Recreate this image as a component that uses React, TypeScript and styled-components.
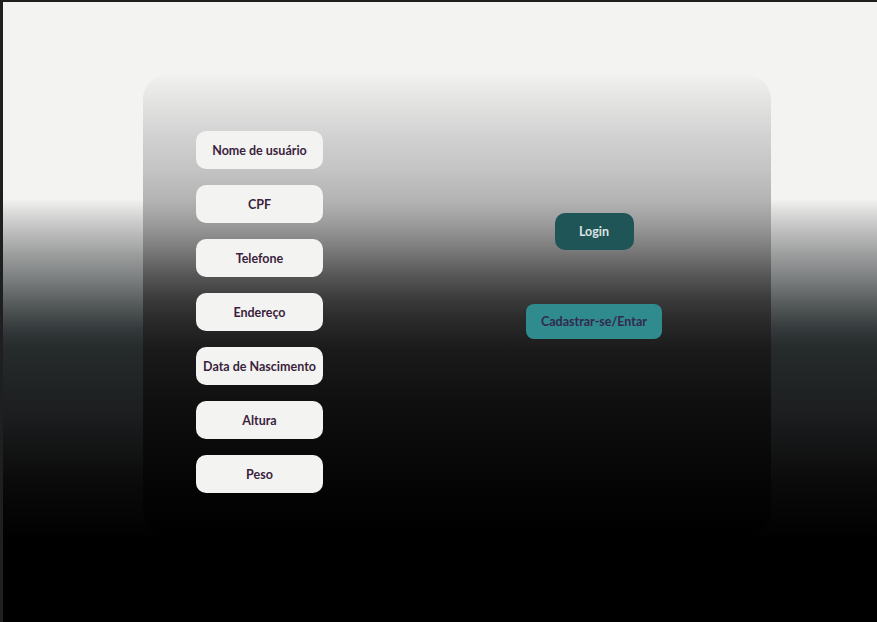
import styled, { createGlobalStyle } from 'styled-components';

const GlobalStyle = createGlobalStyle`
  html, body {
    margin: 0;
    padding: 0;
  }
  body {
    background: #000;
    font-family: Lato, "Noto Sans", sans-serif;
  }
  * {
    box-sizing: border-box;
  }
`;

const StyledPage = styled.div`
  background: linear-gradient(
    to bottom,
    #f3f3f1 0px,
    #f3f3f1 197px,
    #dcdcdb 210px,
    #c0c0c0 228px,
    #9c9e9e 252px,
    #7a7d7e 278px,
    #4d5253 308px,
    #33393a 328px,
    #262b2c 345px,
    #1c1e1f 411px,
    #0b0b0b 478px,
    #000 540px
  );
  border-left: 3px solid #1f1f1f;
  border-top: 2px solid #1f1f1f;
  height: 622px;
  padding: 73px 0 0 140px;
  width: 877px;
`;

const StyledCard = styled.main`
  background: linear-gradient(
    to bottom,
    #f1f1f0 0px,
    #e4e4e3 25px,
    #d2d2d2 60px,
    #c6c6c6 90px,
    #b4b4b4 125px,
    #9a9a9a 150px,
    #7a7a7a 175px,
    #575757 200px,
    #3a3a3a 225px,
    #2a2a2a 245px,
    #1a1a1a 275px,
    #101010 325px,
    #060606 400px,
    #000 460px
  );
  border-radius: 24px;
  display: grid;
  grid-template-columns: 127px 1fr;
  height: 460px;
  padding: 56px 0 0 53px;
  width: 628px;
`;

const StyledFieldList = styled.div`
  display: flex;
  flex-direction: column;
  gap: 16px;
`;

const StyledField = styled.button`
  align-items: center;
  background-color: #f3f3f1;
  border: none;
  border-radius: 10px;
  color: #3b1f3e;
  display: flex;
  font-family: Lato, "Noto Sans", sans-serif;
  font-size: 12.5px;
  font-weight: 700;
  height: 38px;
  justify-content: center;
  padding: 0;
  white-space: nowrap;
  width: 127px;
`;

const StyledActions = styled.div`
  align-items: center;
  display: flex;
  flex-direction: column;
  gap: 54px;
  padding: 82px 0 0 94px;
`;

const StyledAction = styled.button<{ variant: 'dark' | 'light' }>`
  background-color: ${({ variant }) => (variant === 'dark' ? '#1f5557' : '#2f8b8d')};
  border: none;
  border-radius: ${({ variant }) => (variant === 'dark' ? '10px' : '8px')};
  color: ${({ variant }) => (variant === 'dark' ? '#dce3e3' : '#33294f')};
  font-family: Lato, "Noto Sans", sans-serif;
  font-size: 12.5px;
  font-weight: 700;
  height: ${({ variant }) => (variant === 'dark' ? '37px' : '35px')};
  padding: 0;
  white-space: nowrap;
  width: ${({ variant }) => (variant === 'dark' ? '79px' : '136px')};
`;

const fields = [
  'Nome de usuário',
  'CPF',
  'Telefone',
  'Endereço',
  'Data de Nascimento',
  'Altura',
  'Peso',
];

const App = () => (
  <>
    <GlobalStyle />
    <StyledPage>
      <StyledCard>
        <StyledFieldList>
          {fields.map((field) => (
            <StyledField key={field}>{field}</StyledField>
          ))}
        </StyledFieldList>
        <StyledActions>
          <StyledAction variant="dark">Login</StyledAction>
          <StyledAction variant="light">Cadastrar-se/Entar</StyledAction>
        </StyledActions>
      </StyledCard>
    </StyledPage>
  </>
);

export default App;
